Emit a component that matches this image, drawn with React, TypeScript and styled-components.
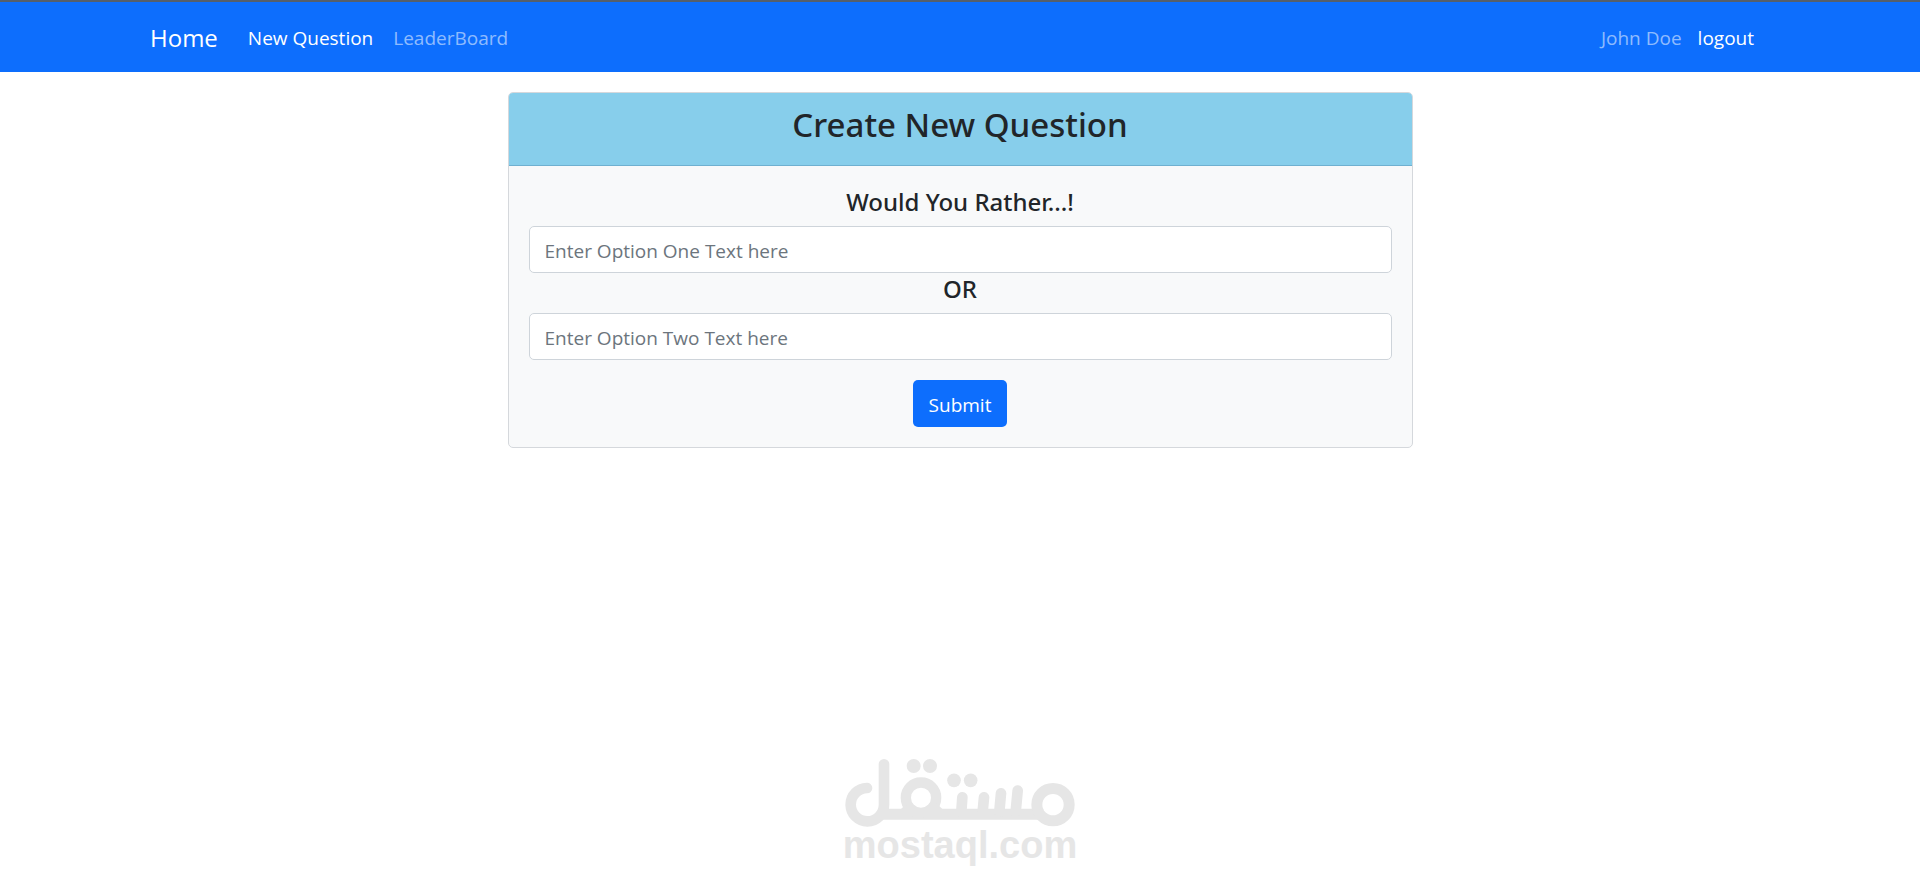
import React from "react";
import styled, { createGlobalStyle } from "styled-components";

const GlobalStyle = createGlobalStyle`
  *, *::before, *::after { box-sizing: border-box; }
  body {
    margin: 0;
    background: #fff;
    color: #212529;
    font-family: "Segoe UI", "Open Sans", "Noto Sans", sans-serif;
    font-size: 19px;
    line-height: 30px;
  }
`;

const Page = styled.div`
  display: flex;
  flex-direction: column;
  min-height: 100vh;
`;

const Navbar = styled.nav`
  padding: 11px 0 9px;
  border-top: 2px solid #555f6b;
  background: #0d6efd;
`;

const NavContainer = styled.div`
  display: flex;
  align-items: center;
  max-width: 1650px;
  min-height: 50px;
  margin: 0 auto;
  padding: 0 15px;
`;

const Brand = styled.a`
  margin-right: 20px;
  color: #fff;
  font-size: 24px;
  text-decoration: none;
`;

const NavLinks = styled.div`
  display: flex;
  flex: 1;
`;

const NavLink = styled.a<{ $active?: boolean }>`
  padding: 10px;
  color: ${({ $active }) => ($active ? "#fff" : "rgba(255, 255, 255, 0.55)")};
  text-decoration: none;
`;

const UserArea = styled.div`
  display: flex;
  gap: 16px;
  padding-right: 16px;
`;

const UserName = styled.span`
  color: rgba(255, 255, 255, 0.55);
`;

const LogoutLink = styled.a`
  color: #fff;
  text-decoration: none;
`;

const Main = styled.main`
  padding: 20px 15px;
`;

const Card = styled.section`
  max-width: 905px;
  margin: 0 auto;
  overflow: hidden;
  border: 1px solid #d5d8dc;
  border-radius: 5px;
  background: #f8f9fa;
  text-align: center;
`;

const CardHeader = styled.header`
  padding: 11px 20px 19px;
  border-bottom: 1px solid #6fb0d0;
  background: #87ceeb;
`;

const Title = styled.h1`
  margin: 0;
  font-family: "Noto Sans", sans-serif;
  font-size: 33px;
  font-weight: 500;
  line-height: 42px;
`;

const QuestionForm = styled.form`
  padding: 20px;
`;

const Prompt = styled.label`
  display: block;
  margin-bottom: 8px;
  font-family: "Noto Sans", sans-serif;
  font-size: 24px;
  font-weight: 500;
  line-height: 32px;
`;

const OptionInput = styled.input`
  display: block;
  width: 100%;
  height: 47px;
  padding: 9px 15px 7px;
  border: 1px solid #ced4da;
  border-radius: 5px;
  background: #fff;
  color: #212529;
  font: inherit;

  &::placeholder {
    color: #6c757d;
    opacity: 1;
  }
`;

const SubmitButton = styled.button`
  height: 47px;
  margin-top: 20px;
  padding: 2px 16px 0;
  border: 0;
  border-radius: 5px;
  background: #0d6efd;
  color: #fff;
  font: inherit;
  vertical-align: top;
  cursor: pointer;
`;

const Footer = styled.footer`
  display: flex;
  flex-direction: column;
  align-items: center;
  margin-top: auto;
  padding-bottom: 20px;
  color: #e6e6e6;
`;

const Wordmark = styled.span`
  font-family: "Liberation Sans", Arial, sans-serif;
  font-size: 38px;
  font-weight: 700;
  line-height: 36px;
`;

const MostaqlLogo = () => (
  <svg
    width="230"
    height="68"
    viewBox="75 57 690 204"
    fill="none"
    stroke="currentColor"
    strokeWidth="32"
    strokeLinecap="round"
    role="img"
    aria-label="مستقل"
  >
    <path d="M192 73V194A50 50 0 1 1 141 144" />
    <path d="M180 223H670" strokeLinecap="butt" strokeWidth="33" />
    <circle cx="303" cy="173" r="45.5" strokeWidth="31" />
    <circle cx="699" cy="194" r="48.5" strokeWidth="33" />
    <path d="M427 172L424 215M492 172L488 215M543 160L538 215M593 152L587 215" />
    <g fill="currentColor" stroke="none">
      <path d="M243 173L250 200L240 210H270ZM363 173L357 197L370 210H335Z" />
      <circle cx="281" cy="78" r="21" />
      <circle cx="330" cy="78" r="21" />
      <circle cx="402" cy="121" r="20.5" />
      <circle cx="452" cy="121" r="20.5" />
    </g>
  </svg>
);

export default function App() {
  return (
    <Page>
      <GlobalStyle />
      <Navbar>
        <NavContainer>
          <Brand href="#home">Home</Brand>
          <NavLinks>
            <NavLink href="#new" $active aria-current="page">
              New Question
            </NavLink>
            <NavLink href="#leaderboard">LeaderBoard</NavLink>
          </NavLinks>
          <UserArea>
            <UserName>John Doe</UserName>
            <LogoutLink href="#logout">logout</LogoutLink>
          </UserArea>
        </NavContainer>
      </Navbar>
      <Main>
        <Card>
          <CardHeader>
            <Title>Create New Question</Title>
          </CardHeader>
          <QuestionForm onSubmit={(event) => event.preventDefault()}>
            <Prompt htmlFor="option-one">Would You Rather...!</Prompt>
            <OptionInput id="option-one" type="text" placeholder="Enter Option One Text here" />
            <Prompt htmlFor="option-two">OR</Prompt>
            <OptionInput id="option-two" type="text" placeholder="Enter Option Two Text here" />
            <SubmitButton type="submit">Submit</SubmitButton>
          </QuestionForm>
        </Card>
      </Main>
      <Footer>
        <MostaqlLogo />
        <Wordmark>mostaql.com</Wordmark>
      </Footer>
    </Page>
  );
}
